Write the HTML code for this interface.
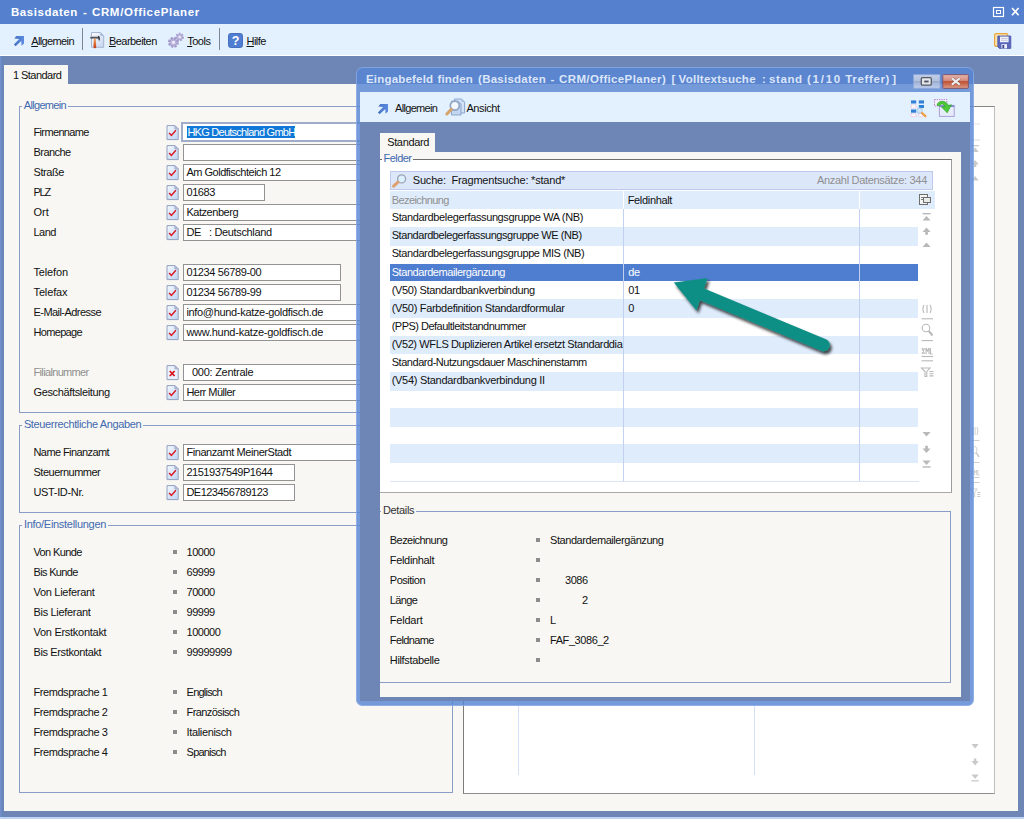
<!DOCTYPE html>
<html lang="de"><head><meta charset="utf-8"><title>Basisdaten - CRM/OfficePlaner</title>
<style>
*{box-sizing:border-box;margin:0;padding:0}
html,body{width:1024px;height:819px;overflow:hidden}
body{position:relative;background:#6e86b6;font-family:"Liberation Sans",sans-serif;font-size:11px;letter-spacing:-0.55px;color:#111;line-height:13px}
.a{position:absolute}
.t{position:absolute;white-space:pre;height:13px;line-height:13px}
.titlebar{left:0;top:0;width:1024px;height:24px;background:#5480ce}
.title{font-weight:bold;font-size:12px;color:#fff;letter-spacing:-0.05px;height:15px;line-height:15px}
.toolbar{background:#e3f0fd}
.panel{background:#f8f7f3}
.fs{border:1px solid #8a9dc6}
.leg{background:#f8f7f3;color:#4169b0;padding:0 2px 0 2px}
.inp{background:#fff;border:1px solid #939393;height:17px}
.inp span{position:absolute;left:3px;top:1px;white-space:pre;line-height:13px}
.bul{width:4px;height:4px;background:#8c8c8c}
.gray{color:#8f8f8f}
.blue{color:#4169b0}
.row{left:390px;width:528px}
.alt{background:#dfecfc}
.sel{background:#4f7dcf;color:#fff}
u{text-decoration:underline;text-underline-offset:1px}
</style></head>
<body>
<div class="a titlebar"></div>
<div class="t title" style="left:11px;top:4.6px;font-size:11.5px"><span style="position:absolute;left:0px;top:0;letter-spacing:0.544px">Basisdaten </span><span style="position:absolute;left:71.9px;top:0;letter-spacing:0px">- </span><span style="position:absolute;left:80.9px;top:0;letter-spacing:0.685px">CRM/OfficePlaner</span></div>
<svg class="a" style="left:992px;top:6px" width="28" height="12" viewBox="0 0 28 12"><rect x="1.5" y="1.5" width="10" height="9" fill="none" stroke="#fff" stroke-width="1.2"/><rect x="4.5" y="4.5" width="4" height="3" fill="none" stroke="#fff" stroke-width="1"/><path d="M20 2 L26.6 9.2 M26.6 2 L20 9.2" stroke="#fff" stroke-width="1.7" fill="none"/></svg>
<div class="a toolbar" style="left:0;top:24px;width:1024px;height:32px;border-bottom:1px solid #fff"></div>
<svg class="a" style="left:13px;top:35.4px" width="12" height="12" viewBox="0 0 12 12"><defs><linearGradient id="ag1" x1="0" y1="0" x2="1" y2="0"><stop offset="0" stop-color="#4672c4"/><stop offset="1" stop-color="#5b8ae0"/></linearGradient></defs><path d="M3.3 1 H11 V8.4 L8.5 10.8 L8.3 6 L2.6 11.3 L0.9 9.6 L6.2 3.9 L1.3 3.6 Z" fill="url(#ag1)"/></svg>
<div class="t" style="left:31.2px;top:35.2px;letter-spacing:-0.624px;"><u>A</u>llgemein</div>
<div class="a" style="left:82px;top:28px;width:1px;height:22px;background:#7d8596"></div>
<svg class="a" style="left:90px;top:32px" width="15" height="17" viewBox="0 0 15 17"><defs><linearGradient id="pg1" x1="0" y1="0" x2="1" y2="1"><stop offset="0" stop-color="#ffffff"/><stop offset="1" stop-color="#c3d3ee"/></linearGradient><linearGradient id="hh1" x1="0" y1="0" x2="0" y2="1"><stop offset="0" stop-color="#f7a25e"/><stop offset="1" stop-color="#c2370f"/></linearGradient></defs><path d="M1.5 .5 H10.4 L13.7 3.8 V15.3 H1.5 Z" fill="url(#pg1)" stroke="#a7b6d2" stroke-width="1"/><path d="M10.4 .5 V3.8 H13.7 Z" fill="#9fb4da"/><rect x=".3" y="3.9" width="8.4" height="1.5" fill="#bfc4cc"/><rect x=".3" y="5.2" width="8.6" height="1.3" fill="#33343a"/><path d="M8.2 4.4 Q9.7 4.8 9.1 8.4" fill="none" stroke="#1f1f22" stroke-width="1.2"/><path d="M3.9 6.5 H5.7 L6.3 15.4 L4.9 16.6 L3.4 15.2 Z" fill="url(#hh1)"/></svg>
<div class="t" style="left:109px;top:35.2px;"><u>B</u>earbeiten</div>
<svg class="a" style="left:167px;top:32px" width="18" height="17" viewBox="0 0 18 17"><circle cx="12.7" cy="5" r="3.3" fill="#bdb7dc" stroke="#a8a1cf" stroke-width="2" stroke-dasharray="1.7 1.15"/><circle cx="12.7" cy="5" r="1.3" fill="#ece9f6"/><circle cx="6.4" cy="10.4" r="4.3" fill="#b8b1d9" stroke="#a29bcb" stroke-width="2.4" stroke-dasharray="2.1 1.3"/><circle cx="6.4" cy="10.4" r="1.7" fill="#ebe8f5"/></svg>
<div class="t" style="left:187.2px;top:35.2px;letter-spacing:-0.477px;"><u>T</u>ools</div>
<div class="a" style="left:219px;top:28px;width:1px;height:22px;background:#7d8596"></div>
<svg class="a" style="left:227.5px;top:32.8px" width="15" height="15" viewBox="0 0 15 15"><rect x=".5" y=".5" width="14" height="14" rx="2.2" fill="#4f7dd1" stroke="#456fc0"/><text x="7.5" y="12" text-anchor="middle" font-family="Liberation Sans,sans-serif" font-weight="bold" font-size="12.5" fill="#fff" letter-spacing="0">?</text></svg>
<div class="t" style="left:246.5px;top:35.2px;"><u>H</u>ilfe</div>
<svg class="a" style="left:994px;top:33px" width="18" height="17" viewBox="0 0 18 17"><rect x=".6" y=".6" width="13.2" height="12.8" rx="1.6" fill="#f8e2b4" stroke="#eaa73a" stroke-width="1.2"/><path d="M3.8 3 H16.8 V15.4 H5.4 L3.8 13.8 Z" fill="#5b67bb" stroke="#4b57a4" stroke-width=".8"/><rect x="6" y="3.6" width="8.6" height="5.6" fill="#f3f4fb"/><path d="M7 5.5 H13.6 M7 7.3 H13.6" stroke="#b9bdd6" stroke-width=".8"/><rect x="7.4" y="11.2" width="5.6" height="4.2" fill="#eef0fa"/><rect x="8.4" y="12" width="1.8" height="3.2" fill="#3b4488"/></svg>
<div class="a panel" style="left:4.4px;top:65px;width:63.8px;height:20px"></div>
<div class="t" style="left:13px;top:68.7px;">1 Standard</div>
<div class="a" style="left:0;top:56px;width:4.4px;height:761px;background:linear-gradient(90deg,#7392d0,#6986ba 60%)"></div>
<div class="a panel" style="left:4.4px;top:84px;width:1013.6px;height:727.3px"></div>
<div class="a" style="left:0;top:816.6px;width:1024px;height:3px;background:#bdd4f7"></div>
<div class="a fs" style="left:19px;top:105.5px;width:434px;height:307.5px"></div><div class="t leg" style="left:21.8px;top:98.5px;letter-spacing:-0.679px;">Allgemein</div>
<div class="a fs" style="left:19px;top:425.3px;width:434px;height:88px"></div><div class="t leg" style="left:21.9px;top:418.3px;letter-spacing:-0.354px;">Steuerrechtliche Angaben</div>
<div class="a fs" style="left:19px;top:525px;width:434px;height:268px"></div><div class="t leg" style="left:21.9px;top:518px;letter-spacing:-0.292px;">Info/Einstellungen</div>
<div class="t" style="left:33.5px;top:125.5px;letter-spacing:-0.645px;">Firmenname</div>
<svg class="a" style="left:165.5px;top:125.3px" width="13" height="16" viewBox="0 0 13 16"><defs><linearGradient id="dg0" x1="0" y1="0" x2=".6" y2="1"><stop offset="0" stop-color="#f4f8fe"/><stop offset="1" stop-color="#c6d9f6"/></linearGradient></defs><path d="M1 .6 H8.9 L12.2 3.9 V14.6 H1 Z" fill="url(#dg0)" stroke="#93a0bd" stroke-width="1"/><path d="M8.9 .6 V3.9 H12.2 Z" fill="#b9c9e6" stroke="#93a0bd" stroke-width=".7"/><path d="M3.1 8 L5.4 10.4 L9.9 5.3" fill="none" stroke="#d9202b" stroke-width="1.55"/></svg>
<div class="a" style="left:181px;top:122px;width:262px;height:20px;background:#fff;border:2.8px solid #a0adca"></div>
<div class="t" style="left:186.8px;top:125.9px;letter-spacing:-0.745px;background:#1079d8;color:#fff;height:12px;line-height:12.4px;padding-left:.6px">HKG Deutschland GmbH</div>
<div class="t" style="left:33.5px;top:145.5px;">Branche</div>
<svg class="a" style="left:165.5px;top:145.3px" width="13" height="16" viewBox="0 0 13 16"><defs><linearGradient id="dg1" x1="0" y1="0" x2=".6" y2="1"><stop offset="0" stop-color="#f4f8fe"/><stop offset="1" stop-color="#c6d9f6"/></linearGradient></defs><path d="M1 .6 H8.9 L12.2 3.9 V14.6 H1 Z" fill="url(#dg1)" stroke="#93a0bd" stroke-width="1"/><path d="M8.9 .6 V3.9 H12.2 Z" fill="#b9c9e6" stroke="#93a0bd" stroke-width=".7"/><path d="M3.1 8 L5.4 10.4 L9.9 5.3" fill="none" stroke="#d9202b" stroke-width="1.55"/></svg>
<div class="a inp" style="left:183px;top:143.8px;width:260px"></div>
<div class="t" style="left:33.5px;top:165.5px;letter-spacing:-0.419px;">Straße</div>
<svg class="a" style="left:165.5px;top:165.3px" width="13" height="16" viewBox="0 0 13 16"><defs><linearGradient id="dg2" x1="0" y1="0" x2=".6" y2="1"><stop offset="0" stop-color="#f4f8fe"/><stop offset="1" stop-color="#c6d9f6"/></linearGradient></defs><path d="M1 .6 H8.9 L12.2 3.9 V14.6 H1 Z" fill="url(#dg2)" stroke="#93a0bd" stroke-width="1"/><path d="M8.9 .6 V3.9 H12.2 Z" fill="#b9c9e6" stroke="#93a0bd" stroke-width=".7"/><path d="M3.1 8 L5.4 10.4 L9.9 5.3" fill="none" stroke="#d9202b" stroke-width="1.55"/></svg>
<div class="a inp" style="left:183px;top:163.8px;width:260px"></div>
<div class="t" style="left:186.4px;top:165.5px;letter-spacing:-0.487px;">Am Goldfischteich 12</div>
<div class="t" style="left:33.5px;top:185.5px;letter-spacing:-1.229px;">PLZ</div>
<svg class="a" style="left:165.5px;top:185.3px" width="13" height="16" viewBox="0 0 13 16"><defs><linearGradient id="dg3" x1="0" y1="0" x2=".6" y2="1"><stop offset="0" stop-color="#f4f8fe"/><stop offset="1" stop-color="#c6d9f6"/></linearGradient></defs><path d="M1 .6 H8.9 L12.2 3.9 V14.6 H1 Z" fill="url(#dg3)" stroke="#93a0bd" stroke-width="1"/><path d="M8.9 .6 V3.9 H12.2 Z" fill="#b9c9e6" stroke="#93a0bd" stroke-width=".7"/><path d="M3.1 8 L5.4 10.4 L9.9 5.3" fill="none" stroke="#d9202b" stroke-width="1.55"/></svg>
<div class="a inp" style="left:183px;top:183.8px;width:82px"></div>
<div class="t" style="left:186.4px;top:185.5px;letter-spacing:-0.379px;">01683</div>
<div class="t" style="left:33.5px;top:205.5px;letter-spacing:0.006px;">Ort</div>
<svg class="a" style="left:165.5px;top:205.3px" width="13" height="16" viewBox="0 0 13 16"><defs><linearGradient id="dg4" x1="0" y1="0" x2=".6" y2="1"><stop offset="0" stop-color="#f4f8fe"/><stop offset="1" stop-color="#c6d9f6"/></linearGradient></defs><path d="M1 .6 H8.9 L12.2 3.9 V14.6 H1 Z" fill="url(#dg4)" stroke="#93a0bd" stroke-width="1"/><path d="M8.9 .6 V3.9 H12.2 Z" fill="#b9c9e6" stroke="#93a0bd" stroke-width=".7"/><path d="M3.1 8 L5.4 10.4 L9.9 5.3" fill="none" stroke="#d9202b" stroke-width="1.55"/></svg>
<div class="a inp" style="left:183px;top:203.8px;width:260px"></div>
<div class="t" style="left:186.4px;top:205.5px;letter-spacing:-0.457px;">Katzenberg</div>
<div class="t" style="left:33.5px;top:225.5px;">Land</div>
<svg class="a" style="left:165.5px;top:225.3px" width="13" height="16" viewBox="0 0 13 16"><defs><linearGradient id="dg5" x1="0" y1="0" x2=".6" y2="1"><stop offset="0" stop-color="#f4f8fe"/><stop offset="1" stop-color="#c6d9f6"/></linearGradient></defs><path d="M1 .6 H8.9 L12.2 3.9 V14.6 H1 Z" fill="url(#dg5)" stroke="#93a0bd" stroke-width="1"/><path d="M8.9 .6 V3.9 H12.2 Z" fill="#b9c9e6" stroke="#93a0bd" stroke-width=".7"/><path d="M3.1 8 L5.4 10.4 L9.9 5.3" fill="none" stroke="#d9202b" stroke-width="1.55"/></svg>
<div class="a inp" style="left:183px;top:223.8px;width:260px"></div>
<div class="t" style="left:186.4px;top:225.5px;letter-spacing:-0.357px;">DE   : Deutschland</div>
<div class="t" style="left:33.5px;top:265.5px;letter-spacing:-0.155px;">Telefon</div>
<svg class="a" style="left:165.5px;top:265.3px" width="13" height="16" viewBox="0 0 13 16"><defs><linearGradient id="dg6" x1="0" y1="0" x2=".6" y2="1"><stop offset="0" stop-color="#f4f8fe"/><stop offset="1" stop-color="#c6d9f6"/></linearGradient></defs><path d="M1 .6 H8.9 L12.2 3.9 V14.6 H1 Z" fill="url(#dg6)" stroke="#93a0bd" stroke-width="1"/><path d="M8.9 .6 V3.9 H12.2 Z" fill="#b9c9e6" stroke="#93a0bd" stroke-width=".7"/><path d="M3.1 8 L5.4 10.4 L9.9 5.3" fill="none" stroke="#d9202b" stroke-width="1.55"/></svg>
<div class="a inp" style="left:183px;top:263.8px;width:158.2px"></div>
<div class="t" style="left:186.4px;top:265.5px;letter-spacing:-0.381px;">01234 56789-00</div>
<div class="t" style="left:33.5px;top:285.5px;letter-spacing:-0.123px;">Telefax</div>
<svg class="a" style="left:165.5px;top:285.3px" width="13" height="16" viewBox="0 0 13 16"><defs><linearGradient id="dg7" x1="0" y1="0" x2=".6" y2="1"><stop offset="0" stop-color="#f4f8fe"/><stop offset="1" stop-color="#c6d9f6"/></linearGradient></defs><path d="M1 .6 H8.9 L12.2 3.9 V14.6 H1 Z" fill="url(#dg7)" stroke="#93a0bd" stroke-width="1"/><path d="M8.9 .6 V3.9 H12.2 Z" fill="#b9c9e6" stroke="#93a0bd" stroke-width=".7"/><path d="M3.1 8 L5.4 10.4 L9.9 5.3" fill="none" stroke="#d9202b" stroke-width="1.55"/></svg>
<div class="a inp" style="left:183px;top:283.8px;width:158.2px"></div>
<div class="t" style="left:186.4px;top:285.5px;letter-spacing:-0.381px;">01234 56789-99</div>
<div class="t" style="left:33.5px;top:305.5px;">E-Mail-Adresse</div>
<svg class="a" style="left:165.5px;top:305.3px" width="13" height="16" viewBox="0 0 13 16"><defs><linearGradient id="dg8" x1="0" y1="0" x2=".6" y2="1"><stop offset="0" stop-color="#f4f8fe"/><stop offset="1" stop-color="#c6d9f6"/></linearGradient></defs><path d="M1 .6 H8.9 L12.2 3.9 V14.6 H1 Z" fill="url(#dg8)" stroke="#93a0bd" stroke-width="1"/><path d="M8.9 .6 V3.9 H12.2 Z" fill="#b9c9e6" stroke="#93a0bd" stroke-width=".7"/><path d="M3.1 8 L5.4 10.4 L9.9 5.3" fill="none" stroke="#d9202b" stroke-width="1.55"/></svg>
<div class="a inp" style="left:183px;top:303.8px;width:260px"></div>
<div class="t" style="left:186.4px;top:305.5px;letter-spacing:-0.322px;">info@hund-katze-goldfisch.de</div>
<div class="t" style="left:33.5px;top:325.5px;letter-spacing:-0.679px;">Homepage</div>
<svg class="a" style="left:165.5px;top:325.3px" width="13" height="16" viewBox="0 0 13 16"><defs><linearGradient id="dg9" x1="0" y1="0" x2=".6" y2="1"><stop offset="0" stop-color="#f4f8fe"/><stop offset="1" stop-color="#c6d9f6"/></linearGradient></defs><path d="M1 .6 H8.9 L12.2 3.9 V14.6 H1 Z" fill="url(#dg9)" stroke="#93a0bd" stroke-width="1"/><path d="M8.9 .6 V3.9 H12.2 Z" fill="#b9c9e6" stroke="#93a0bd" stroke-width=".7"/><path d="M3.1 8 L5.4 10.4 L9.9 5.3" fill="none" stroke="#d9202b" stroke-width="1.55"/></svg>
<div class="a inp" style="left:183px;top:323.8px;width:260px"></div>
<div class="t" style="left:186.4px;top:325.5px;letter-spacing:-0.236px;">www.hund-katze-goldfisch.de</div>
<div class="t gray" style="left:33.5px;top:365.5px;letter-spacing:-0.656px;">Filialnummer</div>
<svg class="a" style="left:165.5px;top:365.3px" width="13" height="16" viewBox="0 0 13 16"><path d="M1 .6 H8.9 L12.2 3.9 V14.6 H1 Z" fill="#eaf1fc" stroke="#93a0bd" stroke-width="1"/><path d="M8.9 .6 V3.9 H12.2 Z" fill="#b9c9e6" stroke="#93a0bd" stroke-width=".7"/><path d="M3.8 6 L8.6 11 M8.6 6 L3.8 11" stroke="#d8131d" stroke-width="1.8"/></svg>
<div class="a inp" style="left:183px;top:363.8px;width:260px"></div>
<div class="t" style="left:186.4px;top:365.5px;letter-spacing:-0.263px;">  000: Zentrale</div>
<div class="t" style="left:33.5px;top:385.5px;letter-spacing:-0.359px;">Geschäftsleitung</div>
<svg class="a" style="left:165.5px;top:385.3px" width="13" height="16" viewBox="0 0 13 16"><defs><linearGradient id="dg11" x1="0" y1="0" x2=".6" y2="1"><stop offset="0" stop-color="#f4f8fe"/><stop offset="1" stop-color="#c6d9f6"/></linearGradient></defs><path d="M1 .6 H8.9 L12.2 3.9 V14.6 H1 Z" fill="url(#dg11)" stroke="#93a0bd" stroke-width="1"/><path d="M8.9 .6 V3.9 H12.2 Z" fill="#b9c9e6" stroke="#93a0bd" stroke-width=".7"/><path d="M3.1 8 L5.4 10.4 L9.9 5.3" fill="none" stroke="#d9202b" stroke-width="1.55"/></svg>
<div class="a inp" style="left:183px;top:383.8px;width:260px"></div>
<div class="t" style="left:186.4px;top:385.5px;letter-spacing:-0.51px;">Herr Müller</div>
<div class="t" style="left:33.5px;top:445.5px;letter-spacing:-0.583px;">Name Finanzamt</div>
<svg class="a" style="left:165.5px;top:445.3px" width="13" height="16" viewBox="0 0 13 16"><defs><linearGradient id="dg12" x1="0" y1="0" x2=".6" y2="1"><stop offset="0" stop-color="#f4f8fe"/><stop offset="1" stop-color="#c6d9f6"/></linearGradient></defs><path d="M1 .6 H8.9 L12.2 3.9 V14.6 H1 Z" fill="url(#dg12)" stroke="#93a0bd" stroke-width="1"/><path d="M8.9 .6 V3.9 H12.2 Z" fill="#b9c9e6" stroke="#93a0bd" stroke-width=".7"/><path d="M3.1 8 L5.4 10.4 L9.9 5.3" fill="none" stroke="#d9202b" stroke-width="1.55"/></svg>
<div class="a inp" style="left:183px;top:443.8px;width:260px"></div>
<div class="t" style="left:186.4px;top:445.5px;letter-spacing:-0.429px;">Finanzamt MeinerStadt</div>
<div class="t" style="left:33.5px;top:465.5px;letter-spacing:-0.497px;">Steuernummer</div>
<svg class="a" style="left:165.5px;top:465.3px" width="13" height="16" viewBox="0 0 13 16"><defs><linearGradient id="dg13" x1="0" y1="0" x2=".6" y2="1"><stop offset="0" stop-color="#f4f8fe"/><stop offset="1" stop-color="#c6d9f6"/></linearGradient></defs><path d="M1 .6 H8.9 L12.2 3.9 V14.6 H1 Z" fill="url(#dg13)" stroke="#93a0bd" stroke-width="1"/><path d="M8.9 .6 V3.9 H12.2 Z" fill="#b9c9e6" stroke="#93a0bd" stroke-width=".7"/><path d="M3.1 8 L5.4 10.4 L9.9 5.3" fill="none" stroke="#d9202b" stroke-width="1.55"/></svg>
<div class="a inp" style="left:183px;top:463.8px;width:112.2px"></div>
<div class="t" style="left:186.4px;top:465.5px;letter-spacing:-0.459px;">2151937549P1644</div>
<div class="t" style="left:33.5px;top:485.5px;letter-spacing:-0.348px;">UST-ID-Nr.</div>
<svg class="a" style="left:165.5px;top:485.3px" width="13" height="16" viewBox="0 0 13 16"><defs><linearGradient id="dg14" x1="0" y1="0" x2=".6" y2="1"><stop offset="0" stop-color="#f4f8fe"/><stop offset="1" stop-color="#c6d9f6"/></linearGradient></defs><path d="M1 .6 H8.9 L12.2 3.9 V14.6 H1 Z" fill="url(#dg14)" stroke="#93a0bd" stroke-width="1"/><path d="M8.9 .6 V3.9 H12.2 Z" fill="#b9c9e6" stroke="#93a0bd" stroke-width=".7"/><path d="M3.1 8 L5.4 10.4 L9.9 5.3" fill="none" stroke="#d9202b" stroke-width="1.55"/></svg>
<div class="a inp" style="left:183px;top:483.8px;width:112.2px"></div>
<div class="t" style="left:186.4px;top:485.5px;letter-spacing:-0.515px;">DE123456789123</div>
<div class="t" style="left:33.5px;top:545.5px;letter-spacing:-0.616px;">Von Kunde</div>
<div class="a bul" style="left:172.5px;top:549.5px"></div>
<div class="t" style="left:186.6px;top:545.5px;letter-spacing:-0.499px;">10000</div>
<div class="t" style="left:33.5px;top:565.5px;letter-spacing:-0.662px;">Bis Kunde</div>
<div class="a bul" style="left:172.5px;top:569.5px"></div>
<div class="t" style="left:186.6px;top:565.5px;letter-spacing:-0.499px;">69999</div>
<div class="t" style="left:33.5px;top:585.5px;letter-spacing:-0.288px;">Von Lieferant</div>
<div class="a bul" style="left:172.5px;top:589.5px"></div>
<div class="t" style="left:186.6px;top:585.5px;letter-spacing:-0.499px;">70000</div>
<div class="t" style="left:33.5px;top:605.5px;letter-spacing:-0.32px;">Bis Lieferant</div>
<div class="a bul" style="left:172.5px;top:609.5px"></div>
<div class="t" style="left:186.6px;top:605.5px;letter-spacing:-0.499px;">99999</div>
<div class="t" style="left:33.5px;top:625.5px;letter-spacing:-0.276px;">Von Erstkontakt</div>
<div class="a bul" style="left:172.5px;top:629.5px"></div>
<div class="t" style="left:186.6px;top:625.5px;letter-spacing:-0.486px;">100000</div>
<div class="t" style="left:33.5px;top:645.5px;letter-spacing:-0.371px;">Bis Erstkontakt</div>
<div class="a bul" style="left:172.5px;top:649.5px"></div>
<div class="t" style="left:186.6px;top:645.5px;letter-spacing:-0.494px;">99999999</div>
<div class="t" style="left:33.5px;top:685.5px;letter-spacing:-0.435px;">Fremdsprache 1</div>
<div class="a bul" style="left:172.5px;top:689.5px"></div>
<div class="t" style="left:186.6px;top:685.5px;letter-spacing:-0.785px;">Englisch</div>
<div class="t" style="left:33.5px;top:705.5px;letter-spacing:-0.435px;">Fremdsprache 2</div>
<div class="a bul" style="left:172.5px;top:709.5px"></div>
<div class="t" style="left:186.6px;top:705.5px;letter-spacing:-0.6px;">Französisch</div>
<div class="t" style="left:33.5px;top:725.5px;letter-spacing:-0.435px;">Fremdsprache 3</div>
<div class="a bul" style="left:172.5px;top:729.5px"></div>
<div class="t" style="left:186.6px;top:725.5px;letter-spacing:-0.357px;">Italienisch</div>
<div class="t" style="left:33.5px;top:745.5px;letter-spacing:-0.435px;">Fremdsprache 4</div>
<div class="a bul" style="left:172.5px;top:749.5px"></div>
<div class="t" style="left:186.6px;top:745.5px;letter-spacing:-0.796px;">Spanisch</div>
<div class="a" style="left:463px;top:105.5px;width:531.6px;height:688.3px;background:#fff;border:1px solid;border-color:#858585 #bebebe #8e8e8e #7c7c7c"></div>
<div class="a" style="left:518px;top:120px;width:1px;height:655px;background:#d3e0f6"></div>
<div class="a" style="left:754px;top:120px;width:1px;height:655px;background:#d3e0f6"></div>
<svg class="a" style="left:969px;top:120px" width="14" height="670" viewBox="0 0 14 670"><g transform="translate(2.5 0) scale(.8 1) translate(-2 0)"><g fill="#c9c9c9" stroke="none"><rect x="2" y="3.5" width="11" height="1" opacity=".5"/><rect x="2" y="19.5" width="11" height="1" opacity=".6"/><rect x="2" y="25" width="9" height="1.3"/><path d="M2 32 H11 L6.5 27.5 Z"/><path d="M6.5 40 L11 44.5 H8 V47 H5 V44.5 H2 Z"/><path d="M2 60.5 H11 L6.5 56 Z"/><path d="M2 624 H11 L6.5 628.5 Z"/><path d="M6.5 645.5 L11 641 H8 V638.5 H5 V641 H2 Z"/><path d="M2 654.5 H11 L6.5 659 Z"/><rect x="2" y="660.2" width="9" height="1.3"/></g><g fill="none" stroke="#c9c9c9" stroke-width="1"><path d="M4 307 q-2 4 0 8 M9 307 q2 4 0 8 M6.5 307 V315"/><path d="M1 320.5 H12"/><circle cx="5.5" cy="330" r="3.5"/><path d="M8 333 L11.5 337" stroke-width="1.8"/><path d="M1 342.5 H12"/><path d="M1 350 L4 355 M4 350 L1 355 M5.5 355 V350 L7 352.5 L8.5 350 V355 M10 350 V355 H12"/><path d="M1 357.5 H12 M1 362.5 H12"/><path d="M1 369 H9 L6 372.5 V377 H4.5 V372.5 Z M9 372.5 H13 M9 374.5 H13 M9 376.5 H13"/></g></g></svg>
<div class="a" style="left:355.5px;top:67px;width:618.6px;height:638.7px;border-radius:6.5px;background:rgba(87,133,212,.82);box-shadow:inset 0 0 0 1px rgba(170,196,238,.5)"></div>
<div class="a" style="left:360.3px;top:92px;width:610px;height:609.3px;background:#6e86b6"></div>
<div class="t title" style="left:366px;top:72.2px;color:#dbe6f9;font-size:11.5px"><span style="position:absolute;left:0px;top:0;letter-spacing:0.192px">Eingabefeld </span><span style="position:absolute;left:71.4px;top:0;letter-spacing:0.167px">finden </span><span style="position:absolute;left:112.1px;top:0;letter-spacing:0.237px">(Basisdaten </span><span style="position:absolute;left:184.4px;top:0;letter-spacing:0px">- </span><span style="position:absolute;left:193.1px;top:0;letter-spacing:0.355px">CRM/OfficePlaner) </span><span style="position:absolute;left:305.6px;top:0;letter-spacing:0px">[ </span><span style="position:absolute;left:312.6px;top:0;letter-spacing:0.252px">Volltextsuche </span><span style="position:absolute;left:396px;top:0;letter-spacing:0px">: </span><span style="position:absolute;left:403px;top:0;letter-spacing:0.586px">stand </span><span style="position:absolute;left:441px;top:0;letter-spacing:1.736px">(1/10 </span><span style="position:absolute;left:479.3px;top:0;letter-spacing:0.634px">Treffer) </span><span style="position:absolute;left:526.2px;top:0;letter-spacing:0px">]</span></div>
<svg class="a" style="left:913px;top:74px" width="56" height="15" viewBox="0 0 56 15"><defs><linearGradient id="gmx" x1="0" y1="0" x2="0" y2="1"><stop offset="0" stop-color="#c2cfe8"/><stop offset=".45" stop-color="#b2c1de"/><stop offset=".52" stop-color="#93a5c8"/><stop offset=".62" stop-color="#a7b9dc"/><stop offset="1" stop-color="#bdcdec"/></linearGradient><linearGradient id="gcl" x1="0" y1="0" x2="0" y2="1"><stop offset="0" stop-color="#e6b5ab"/><stop offset=".42" stop-color="#d58f80"/><stop offset=".5" stop-color="#bf5638"/><stop offset=".66" stop-color="#c8674a"/><stop offset="1" stop-color="#dc9c88"/></linearGradient></defs><rect x=".4" y=".6" width="26.6" height="13.8" rx=".6" fill="url(#gmx)" stroke="#8aa4d8" stroke-width=".8"/><rect x="8.3" y="3.7" width="10" height="7.4" rx="1.2" fill="#e4e6ea" stroke="#555a66" stroke-width="1.3"/><rect x="11.2" y="6.6" width="4.4" height="1.8" fill="#4c5060"/><rect x="29.8" y=".6" width="25.6" height="13.8" rx=".8" fill="url(#gcl)" stroke="#7d5870" stroke-width="1"/><path d="M38.9 4.2 L46.7 10.6 M46.7 4.2 L38.9 10.6" stroke="#5a4050" stroke-width="3.2" stroke-opacity=".45" fill="none"/><path d="M38.9 4.2 L46.7 10.6 M46.7 4.2 L38.9 10.6" stroke="#ededed" stroke-width="2.1" fill="none"/></svg>
<div class="a toolbar" style="left:360.3px;top:92px;width:610px;height:29.8px"></div>
<svg class="a" style="left:377.3px;top:103.2px" width="12" height="12" viewBox="0 0 12 12"><defs><linearGradient id="ag2" x1="0" y1="0" x2="1" y2="0"><stop offset="0" stop-color="#4672c4"/><stop offset="1" stop-color="#5b8ae0"/></linearGradient></defs><path d="M3.3 1 H11 V8.4 L8.5 10.8 L8.3 6 L2.6 11.3 L0.9 9.6 L6.2 3.9 L1.3 3.6 Z" fill="url(#ag2)"/></svg>
<div class="t" style="left:395px;top:101.7px;letter-spacing:-0.679px;">Allgemein</div>
<svg class="a" style="left:445px;top:98px" width="21" height="19" viewBox="0 0 21 19"><path d="M9.5 1 H16.5 L19.6 4.1 V15 H9.5 Z" fill="#d3e1f5" stroke="#8ba5d0"/><path d="M16.5 1 V4.1 H19.6 Z" fill="#a9c0e4"/><path d="M6.5 3.2 H13 L16 6.2 V17 H6.5 Z" fill="#c3d6f0" stroke="#8ba5d0"/><circle cx="9.8" cy="7.6" r="4.5" fill="#f2f8fe" stroke="#93a6c6" stroke-width="1.7"/><path d="M6.3 11.4 L1.9 16" stroke="#d6a46a" stroke-width="3" stroke-linecap="round"/></svg>
<div class="t" style="left:466.4px;top:101.7px;letter-spacing:-0.397px;">Ansicht</div>
<svg class="a" style="left:910px;top:99px" width="18" height="19" viewBox="0 0 18 19"><g fill="#2f80d6"><rect x="1" y="1.4" width="5.2" height="3.1"/><rect x="8.8" y="1.4" width="5.2" height="3.1"/><rect x="8.8" y="6" width="5.2" height="3"/><rect x="1" y="10.5" width="5.2" height="3.2"/></g><g fill="#fff" stroke="#eaa4cc" stroke-width=".8" stroke-dasharray="1 1"><rect x="1.2" y="6" width="4.8" height="3"/><rect x="1.2" y="15" width="4.8" height="2.6"/><rect x="8.8" y="15" width="3.6" height="2.6"/></g><circle cx="9.6" cy="11.6" r="2.7" fill="#cfe6f8" stroke="#9fc0e4" stroke-width=".9"/><path d="M12 14 L15.4 17.2" stroke="#eda048" stroke-width="2.3" stroke-linecap="round"/></svg>
<svg class="a" style="left:934px;top:98px" width="22" height="20" viewBox="0 0 22 20"><rect x=".5" y="1.6" width="12.4" height="6.4" fill="#f4f1fb" stroke="#b565cc" stroke-width=".9" stroke-dasharray="1.2 1.1"/><rect x="5.4" y="7.4" width="14.8" height="11" fill="#e6edfa" stroke="#ab9fd9" stroke-width="1"/><rect x="5.4" y="7.2" width="14.8" height="1.8" fill="#8189cc"/><path d="M3 7.2 C4 2.2 11.8 1.6 14.4 7.6 L17.4 6.8 L13.2 14.8 L7.6 9 L11 8.6 C9.6 5.2 6.6 5.2 5.8 7.8 Z" fill="#4cc83a" stroke="#2fa526" stroke-width=".7"/></svg>
<div class="a panel" style="left:379.5px;top:132.5px;width:55.5px;height:20px"></div>
<div class="t" style="left:387.2px;top:136px;letter-spacing:-0.357px;">Standard</div>
<div class="a panel" style="left:379.5px;top:152px;width:581.5px;height:544.5px"></div>
<div class="a" style="left:379.5px;top:159px;width:572.5px;height:333.5px;background:#fff;border:1px solid;border-color:#6f6f6f #9c9c9c #a8a8a8 #6f6f6f;border-left:none"></div>
<div class="t leg blue" style="left:381.6px;top:151.5px;background:linear-gradient(#f8f7f3 0 8px,#fff 8px)">Felder</div>
<div class="a" style="left:390px;top:171px;width:542.8px;height:18.5px;background:#dde7fa;border:1px solid #bfc9ec"></div>
<svg class="a" style="left:391px;top:172px" width="16" height="17" viewBox="0 0 16 17"><circle cx="10.6" cy="6.9" r="4" fill="#dcf1fb" stroke="#9ba3b5" stroke-width="1.3"/><path d="M7 10.2 L2.6 14.2" stroke="#dda070" stroke-width="3.1" stroke-linecap="round"/></svg>
<div class="t" style="left:412.8px;top:173.6px;letter-spacing:-0.199px;">Suche:  Fragmentsuche: *stand*</div>
<div class="t gray" style="left:817px;top:173.6px;letter-spacing:-0.31px;">Anzahl Datensätze: 344</div>
<div class="a alt" style="left:390px;top:191.2px;width:544.6px;height:17.4px"></div>
<div class="t gray" style="left:391.7px;top:193.7px;letter-spacing:-0.583px;">Bezeichnung</div>
<div class="t" style="left:627.7px;top:193.7px;letter-spacing:-0.33px;">Feldinhalt</div>
<svg class="a" style="left:918.3px;top:193.2px" width="14" height="13" viewBox="0 0 14 13"><rect x="1.5" y="1.5" width="8" height="10" fill="#f4f4f4" stroke="#6e6e6e"/><path d="M3 4.5 H8 M3 6.5 H8" stroke="#6e6e6e" stroke-width=".9"/><rect x="5.5" y="4.5" width="7" height="5" fill="#e9e9e9" stroke="#6e6e6e"/></svg>
<div class="t" style="left:391.7px;top:211.2px;letter-spacing:-0.372px;">Standardbelegerfassungsgruppe WA (NB)</div>
<div class="a row alt" style="top:226.83px;height:18.73px"></div>
<div class="t" style="left:391.7px;top:229.33px;letter-spacing:-0.434px;">Standardbelegerfassungsgruppe WE (NB)</div>
<div class="t" style="left:391.7px;top:247.46px;letter-spacing:-0.405px;">Standardbelegerfassungsgruppe MIS (NB)</div>
<div class="a row sel" style="top:263.89px;height:17.13px"></div>
<div class="t" style="left:391.7px;top:265.59px;letter-spacing:-0.437px;color:#fff">Standardemailergänzung</div>
<div class="t" style="left:628.3px;top:265.59px;color:#fff;letter-spacing:-.3px">de</div>
<div class="t" style="left:391.7px;top:283.72px;letter-spacing:-0.353px;">(V50) Standardbankverbindung</div>
<div class="t" style="left:628.3px;top:283.72px;;letter-spacing:-.3px">01</div>
<div class="a row alt" style="top:299.35px;height:18.73px"></div>
<div class="t" style="left:391.7px;top:301.85px;letter-spacing:-0.318px;">(V50) Farbdefinition Standardformular</div>
<div class="t" style="left:628.3px;top:301.85px;;letter-spacing:-.3px">0</div>
<div class="t" style="left:391.7px;top:319.98px;letter-spacing:-0.509px;">(PPS) Defaultleitstandnummer</div>
<div class="a row alt" style="top:335.61px;height:18.73px"></div>
<div class="t" style="left:391.7px;top:338.11px;letter-spacing:-0.387px;">(V52) WFLS Duplizieren Artikel ersetzt Standarddia</div>
<div class="t" style="left:391.7px;top:356.24px;letter-spacing:-0.461px;">Standard-Nutzungsdauer Maschinenstamm</div>
<div class="a row alt" style="top:371.87px;height:18.73px"></div>
<div class="t" style="left:391.7px;top:374.37px;letter-spacing:-0.289px;">(V54) Standardbankverbindung II</div>
<div class="a row alt" style="top:408.13px;height:18.73px"></div>
<div class="a row alt" style="top:444.39px;height:18.73px"></div>
<div class="a" style="left:623px;top:208.5px;width:1px;height:273px;background:#c3d1f0"></div>
<div class="a" style="left:859px;top:208.5px;width:1px;height:273px;background:#c3d1f0"></div>
<div class="a" style="left:622.8px;top:191.2px;width:1.3px;height:17.4px;background:#fff"></div>
<div class="a" style="left:858.8px;top:191.2px;width:1.6px;height:17.4px;background:#fff"></div>
<div class="a" style="left:390px;top:481px;width:529px;height:1px;background:#dbe6f8"></div>
<svg class="a" style="left:919px;top:209.6px" width="16" height="262" viewBox="0 0 16 262"><g fill="#b9b9b9" transform="translate(3.5 0) scale(.9 1) translate(-3.5 0)"><rect x="3.5" y="3" width="9" height="1.4"/><path d="M3.5 10.5 H12.5 L8 6 Z"/><path d="M8 17.5 L12.5 22 H9.5 V24.8 H6.5 V22 H3.5 Z"/><path d="M3.5 37 H12.5 L8 32.5 Z"/><path d="M3.5 222 H12.5 L8 226.5 Z"/><path d="M8 243 L12.5 238.5 H9.5 V235.7 H6.5 V238.5 H3.5 Z"/><path d="M3.5 250.5 H12.5 L8 255 Z"/><rect x="3.5" y="256.3" width="9" height="1.4"/></g><g fill="none" stroke="#b9b9b9" stroke-width="1.1"><path d="M5 95 q-2.2 4 0 8 M11 95 q2.2 4 0 8 M8 95 V103"/><path d="M2.5 108.8 H14"/><circle cx="7" cy="118" r="3.8"/><path d="M9.8 121 L13.5 125.5" stroke-width="2"/><path d="M2.5 130.6 H14"/><path d="M3 138 L5.5 144 M5.5 138 L3 144 M7 144 V138 L8.5 141 L10 138 V144 M11.5 138 V144 H13.5"/><path d="M2.5 146.5 H14"/><path d="M2.5 150.8 H14"/><path d="M2.5 158 H11 L7.8 161.5 V166.5 H6 V161.5 Z"/><path d="M10.5 161.5 H14.5 M10.5 163.7 H14.5 M10.5 165.9 H14.5"/></g></svg>
<div class="a fs" style="left:379.5px;top:510.5px;width:571.5px;height:172.5px;border-left:none"></div>
<div class="t leg" style="left:381px;top:503.7px;letter-spacing:-0.346px;color:#333">Details</div>
<div class="t" style="left:389.8px;top:533.8px;letter-spacing:-0.555px;">Bezeichnung</div>
<div class="a bul" style="left:536.3px;top:537.7px"></div>
<div class="t" style="left:550px;top:533.8px;letter-spacing:-0.428px;">Standardemailergänzung</div>
<div class="t" style="left:389.8px;top:553.8px;letter-spacing:-0.33px;">Feldinhalt</div>
<div class="a bul" style="left:536.3px;top:557.7px"></div>
<div class="t" style="left:389.8px;top:573.8px;letter-spacing:-0.48px;">Position</div>
<div class="a bul" style="left:536.3px;top:577.7px"></div>
<div class="t" style="right:436.4px;top:573.8px;letter-spacing:-0.471px;">3086</div>
<div class="t" style="left:389.8px;top:593.8px;letter-spacing:-0.619px;">Länge</div>
<div class="a bul" style="left:536.3px;top:597.7px"></div>
<div class="t" style="right:436.4px;top:593.8px;">2</div>
<div class="t" style="left:389.8px;top:613.8px;letter-spacing:-0.207px;">Feldart</div>
<div class="a bul" style="left:536.3px;top:617.7px"></div>
<div class="t" style="left:550px;top:613.8px;">L</div>
<div class="t" style="left:389.8px;top:633.8px;letter-spacing:-0.615px;">Feldname</div>
<div class="a bul" style="left:536.3px;top:637.7px"></div>
<div class="t" style="left:550px;top:633.8px;letter-spacing:-0.42px;">FAF_3086_2</div>
<div class="t" style="left:389.8px;top:653.8px;letter-spacing:-0.343px;">Hilfstabelle</div>
<div class="a bul" style="left:536.3px;top:657.7px"></div>
<svg class="a" style="left:650px;top:260px;overflow:visible" width="200" height="110" viewBox="650 260 200 110"><defs><filter id="ash" x="-10%" y="-20%" width="125%" height="150%"><feGaussianBlur in="SourceAlpha" stdDeviation="1.4"/><feOffset dx="2" dy="2.8"/><feComponentTransfer><feFuncA type="linear" slope=".72"/></feComponentTransfer><feMerge><feMergeNode/><feMergeNode in="SourceGraphic"/></feMerge></filter></defs><g filter="url(#ash)"><path d="M700 293.5 L823.5 345" stroke="#108f86" stroke-width="12.5" stroke-linecap="round" fill="none"/><path d="M673.8 282.5 L707.6 278 L696.5 310.4 Z" fill="#108f86"/></g></svg>
</body></html>
